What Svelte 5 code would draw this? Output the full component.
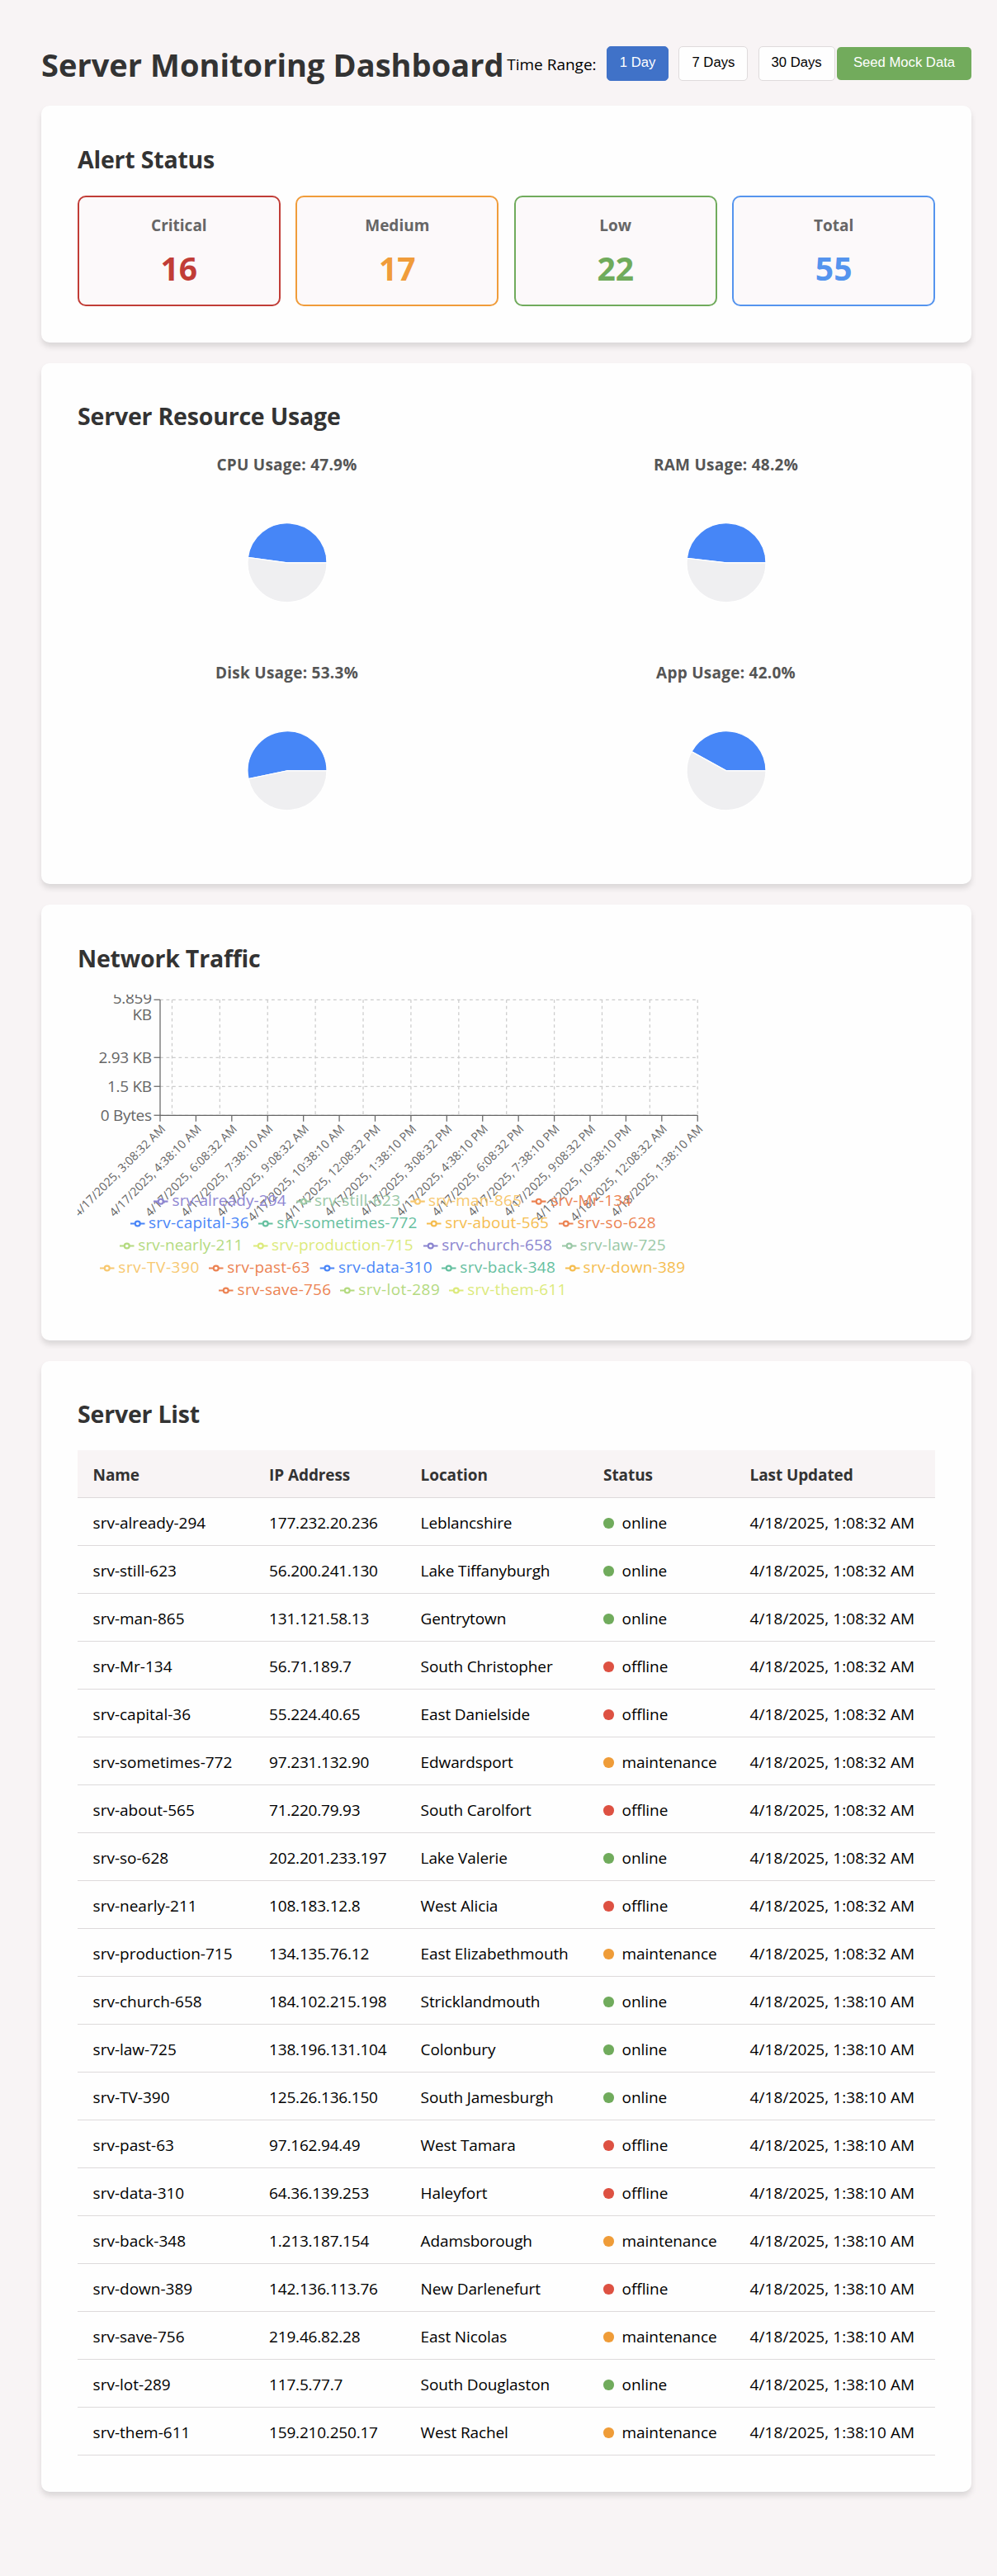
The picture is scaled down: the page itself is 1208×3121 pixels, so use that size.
<script>
  const ranges = ['1 Day', '7 Days', '30 Days'];
  let selected = $state('1 Day');

  const alerts = [
    { label: 'Critical', value: 16, tone: 'critical' },
    { label: 'Medium', value: 17, tone: 'medium' },
    { label: 'Low', value: 22, tone: 'low' },
    { label: 'Total', value: 55, tone: 'total' }
  ];

  const usages = [
    { label: 'CPU Usage', value: 47.9 },
    { label: 'RAM Usage', value: 48.2 },
    { label: 'Disk Usage', value: 53.3 },
    { label: 'App Usage', value: 42.0 }
  ];

  const R = 48;

  // Pie slice between two percentages, counter-clockwise from three o'clock.
  function slice(from, to) {
    const a = (from / 100) * 2 * Math.PI;
    const b = (to / 100) * 2 * Math.PI;
    const large = to - from > 50 ? 1 : 0;
    return `M${R * Math.cos(a)},${-R * Math.sin(a)} A${R},${R} 0 ${large} 0 ${R * Math.cos(b)},${-R * Math.sin(b)} L0,0 Z`;
  }

  // Plot area of the traffic chart
  const plot = { left: 100, right: 751.25, top: 6.25, bottom: 146.25 };
  const step = (plot.right - plot.left) / 15;
  const columns = Array.from({ length: 12 }, (_, i) => plot.right - (i * step * 4) / 3);
  const yTicks = [
    { y: 76.25, label: '2.93 KB' },
    { y: 111.25, label: '1.5 KB' },
    { y: 146.25, label: '0 Bytes' }
  ];
  const gridRows = [6.25, 76.25, 111.25, 146.25];
  const times = [
    '4/17/2025, 3:08:32 AM', '4/17/2025, 4:38:10 AM', '4/17/2025, 6:08:32 AM', '4/17/2025, 7:38:10 AM',
    '4/17/2025, 9:08:32 AM', '4/17/2025, 10:38:10 AM', '4/17/2025, 12:08:32 PM', '4/17/2025, 1:38:10 PM',
    '4/17/2025, 3:08:32 PM', '4/17/2025, 4:38:10 PM', '4/17/2025, 6:08:32 PM', '4/17/2025, 7:38:10 PM',
    '4/17/2025, 9:08:32 PM', '4/17/2025, 10:38:10 PM', '4/18/2025, 12:08:32 AM', '4/18/2025, 1:38:10 AM'
  ];

  // name, icon x, text x, text width, colour
  const legend = [
    { y: 250.7, items: [
      ['srv-already-294', 92, 114.6, 138, '#8f86d2'],
      ['srv-still-623', 265.3, 287, 104, '#9ac8a6'],
      ['srv-man-865', 403.3, 425, 113, '#f7c870'],
      ['srv-Mr-134', 550, 573.2, 98, '#ec8353']
    ] },
    { y: 277.5, items: [
      ['srv-capital-36', 64, 86, 121.5, '#4a86f7'],
      ['srv-sometimes-772', 219, 241.3, 170, '#66c0a0'],
      ['srv-about-565', 423, 445.3, 125.5, '#f5bd50'],
      ['srv-so-628', 583, 605.6, 95, '#ec8353']
    ] },
    { y: 304.5, items: [
      ['srv-nearly-211', 51, 73.3, 127, '#b4da80'],
      ['srv-production-715', 213, 235, 171.5, '#dcea7c'],
      ['srv-church-658', 419, 441.3, 133.5, '#8a84cf'],
      ['srv-law-725', 587, 608.6, 104, '#9ac8a6']
    ] },
    { y: 331.5, items: [
      ['srv-TV-390', 27, 49.3, 98, '#f7c870'],
      ['srv-past-63', 159, 181.3, 100, '#ec8353'],
      ['srv-data-310', 293.7, 316, 113.5, '#4a86f7'],
      ['srv-back-348', 441, 463.3, 115.5, '#66c0a0'],
      ['srv-down-389', 591, 612.6, 123.5, '#f5bd50']
    ] },
    { y: 358.5, items: [
      ['srv-save-756', 171, 193.6, 113.5, '#ec8353'],
      ['srv-lot-289', 318, 340.3, 98.5, '#b4da80'],
      ['srv-them-611', 450, 472.3, 120, '#dcea7c']
    ] }
  ];

  const early = '4/18/2025, 1:08:32 AM';
  const late = '4/18/2025, 1:38:10 AM';
  const servers = [
    ['srv-already-294', '177.232.20.236', 'Leblancshire', 'online', early],
    ['srv-still-623', '56.200.241.130', 'Lake Tiffanyburgh', 'online', early],
    ['srv-man-865', '131.121.58.13', 'Gentrytown', 'online', early],
    ['srv-Mr-134', '56.71.189.7', 'South Christopher', 'offline', early],
    ['srv-capital-36', '55.224.40.65', 'East Danielside', 'offline', early],
    ['srv-sometimes-772', '97.231.132.90', 'Edwardsport', 'maintenance', early],
    ['srv-about-565', '71.220.79.93', 'South Carolfort', 'offline', early],
    ['srv-so-628', '202.201.233.197', 'Lake Valerie', 'online', early],
    ['srv-nearly-211', '108.183.12.8', 'West Alicia', 'offline', early],
    ['srv-production-715', '134.135.76.12', 'East Elizabethmouth', 'maintenance', early],
    ['srv-church-658', '184.102.215.198', 'Stricklandmouth', 'online', late],
    ['srv-law-725', '138.196.131.104', 'Colonbury', 'online', late],
    ['srv-TV-390', '125.26.136.150', 'South Jamesburgh', 'online', late],
    ['srv-past-63', '97.162.94.49', 'West Tamara', 'offline', late],
    ['srv-data-310', '64.36.139.253', 'Haleyfort', 'offline', late],
    ['srv-back-348', '1.213.187.154', 'Adamsborough', 'maintenance', late],
    ['srv-down-389', '142.136.113.76', 'New Darlenefurt', 'offline', late],
    ['srv-save-756', '219.46.82.28', 'East Nicolas', 'maintenance', late],
    ['srv-lot-289', '117.5.77.7', 'South Douglaston', 'online', late],
    ['srv-them-611', '159.210.250.17', 'West Rachel', 'maintenance', late]
  ];
</script>

<div class="dashboard">
  <header>
    <h1>Server Monitoring Dashboard</h1>
    <div class="time-range">
      <span class="range-label">Time Range:</span>
      {#each ranges as range}
        <button class="range" class:active={selected === range} onclick={() => (selected = range)}>{range}</button>
      {/each}
    </div>
    <button class="seed">Seed Mock Data</button>
  </header>

  <section class="card">
    <h2>Alert Status</h2>
    <div class="alerts">
      {#each alerts as alert}
        <div class="alert {alert.tone}">
          <h3>{alert.label}</h3>
          <p>{alert.value}</p>
        </div>
      {/each}
    </div>
  </section>

  <section class="card resources">
    <h2>Server Resource Usage</h2>
    <div class="usages">
      {#each usages as usage}
        <div class="usage">
          <h4>{usage.label}: {usage.value.toFixed(1)}%</h4>
          <svg width="250" height="187.5" viewBox="-125 -93.75 250 187.5">
            <path class="used" d={slice(0, usage.value)} />
            <path class="free" d={slice(usage.value, 100)} />
          </svg>
        </div>
      {/each}
    </div>
  </section>

  <section class="card">
    <h2>Network Traffic</h2>
    <svg class="traffic" width="1039" height="375" viewBox="0 0 1039 375">
      <g class="grid">
        {#each gridRows as y}
          <line x1={plot.left} x2={plot.right} y1={y} y2={y} />
        {/each}
        {#each columns as x}
          <line x1={x} x2={x} y1={plot.top} y2={plot.bottom} />
        {/each}
      </g>
      <g class="axis">
        <line x1={plot.left} x2={plot.right} y1={plot.bottom} y2={plot.bottom} />
        <line x1={plot.left} x2={plot.left} y1={plot.top} y2={plot.bottom} />
        {#each gridRows as y}
          <line x1={plot.left - 7.5} x2={plot.left} y1={y} y2={y} />
        {/each}
        {#each times as _, i}
          <line x1={plot.left + i * step} x2={plot.left + i * step} y1={plot.bottom} y2={plot.bottom + 7.5} />
        {/each}
      </g>
      <g class="y-labels">
        <text x="89.7" y="10.9">5.859</text>
        <text x="89.7" y="31.3">KB</text>
        {#each yTicks as tick}
          <text x="89.7" y={tick.y + 6.8}>{tick.label}</text>
        {/each}
      </g>
      <g class="x-labels">
        {#each times as time, i}
          <text transform="translate({plot.left + i * step} {plot.bottom + 10}) rotate(-45)" y="10.4">{time}</text>
        {/each}
      </g>
      {#each legend as row}
        {#each row.items as [name, iconX, textX, width, color]}
          <g transform="translate({iconX} {row.y})" stroke={color} stroke-width="2.2" fill="none">
            <path d="M0,0H5.8M11.7,0H17.5" />
            <circle cx="8.75" cy="0" r="2.95" />
          </g>
          <text class="series" x={textX} y={row.y + 5.4} textLength={width} fill={color}>{name}</text>
        {/each}
      {/each}
    </svg>
  </section>

  <section class="card list">
    <h2>Server List</h2>
    <table>
      <colgroup>
        <col class="c-name" /><col class="c-ip" /><col class="c-location" /><col class="c-status" /><col />
      </colgroup>
      <thead>
        <tr><th>Name</th><th>IP Address</th><th>Location</th><th>Status</th><th>Last Updated</th></tr>
      </thead>
      <tbody>
        {#each servers as [name, ip, location, status, updated]}
          <tr>
            <td>{name}</td>
            <td class="ip">{ip}</td>
            <td class="location">{location}</td>
            <td><span class="status"><i class="dot {status}"></i>{status}</span></td>
            <td class="updated">{updated}</td>
          </tr>
        {/each}
      </tbody>
    </table>
  </section>
</div>

<style>
  :global(body) {
    background: #f8f4f5;
  }

  .dashboard {
    display: flex;
    flex-direction: column;
    gap: 25px;
    width: 1127px;
    min-height: 3121px;
    box-sizing: border-box;
    margin-left: 50px;
    padding-top: 50px;
    font-family: 'Open Sans', 'Noto Sans', sans-serif;
    font-size: 19px;
    color: #000;
  }

  h1, h2, h3, h4, p {
    margin: 0;
  }

  header {
    display: flex;
    align-items: center;
    gap: 2.4px;
    height: 53px;
  }

  h1 {
    padding-top: 3px;
    font-size: 38px;
    line-height: 50px;
    letter-spacing: 0.03px;
    font-weight: 700;
    color: #333;
    white-space: nowrap;
  }

  .time-range {
    display: flex;
    align-items: center;
    gap: 12.2px;
    margin-left: auto;
  }

  .range-label {
    padding-top: 2px;
    line-height: 26px;
    white-space: nowrap;
  }

  button {
    box-sizing: border-box;
    padding: 0 15px 1px;
    border-radius: 5px;
    font-family: 'Liberation Sans', Arial, sans-serif;
    font-size: 16.67px;
    font-weight: 400;
    white-space: nowrap;
    cursor: pointer;
  }

  .range {
    height: 42px;
    border: 1px solid #dfdbdc;
    background: #fefefe;
    color: #000;
  }

  .range.active {
    border-color: #4072c8;
    background: #4072c8;
    color: #fff;
  }

  .seed {
    width: 163px;
    height: 40px;
    border: none;
    background: #72ab5c;
    color: #fff;
  }

  .card {
    padding: 44px;
    border-radius: 10px;
    background: #fefefe;
    box-shadow: 0 5px 7.5px rgba(0, 0, 0, 0.12);
  }

  h2 {
    margin-bottom: 25px;
    padding-top: 2px;
    font-size: 28.5px;
    line-height: 38px;
    letter-spacing: -0.2px;
    font-weight: 700;
    color: #333;
  }

  .resources h2 {
    margin-bottom: 26px;
    padding-top: 1px;
  }

  .list h2 {
    padding-top: 1px;
  }

  .alerts {
    display: grid;
    grid-template-columns: repeat(4, 1fr);
    gap: 18.75px;
  }

  .alert {
    box-sizing: border-box;
    height: 134px;
    padding-top: 20.6px;
    border: 2px solid currentColor;
    border-radius: 10px;
    background: #fcf9fa;
    text-align: center;
  }

  .alert h3 {
    font-size: 19px;
    line-height: 26px;
    font-weight: 700;
    color: #666;
  }

  .alert p {
    margin-top: 15px;
    font-size: 39px;
    line-height: 48px;
    font-weight: 700;
  }

  .critical { color: #c13d37; }
  .medium { color: #f09c3a; }
  .low { color: #70ab5c; }
  .total { color: #5594ee; }

  .usages {
    display: grid;
    grid-template-columns: repeat(2, 1fr);
    gap: 25px;
  }

  .usage {
    display: flex;
    flex-direction: column;
    align-items: center;
    gap: 11px;
  }

  .usage h4 {
    padding-top: 1px;
    font-size: 19px;
    line-height: 27px;
    letter-spacing: 0.25px;
    font-weight: 700;
    color: #555;
  }

  .usage svg, .traffic {
    display: block;
  }

  .used, .free {
    stroke: #fff;
    stroke-width: 1.25;
  }

  .used { fill: #4686f7; }
  .free { fill: #efeff1; }

  .traffic {
    overflow: hidden;
  }

  .grid line {
    stroke: #ccc;
    stroke-width: 1.25;
    stroke-dasharray: 3.75 3.75;
  }

  .axis line {
    stroke: #666;
    stroke-width: 1.25;
  }

  .y-labels text {
    fill: #666;
    font-size: 19px;
    letter-spacing: -0.32px;
    text-anchor: end;
  }

  .x-labels text {
    fill: #666;
    font-size: 14.25px;
    letter-spacing: 0.08px;
    text-anchor: end;
  }

  .series {
    font-size: 19px;
  }

  table {
    width: 100%;
    table-layout: fixed;
    border-collapse: separate;
    border-spacing: 0;
  }

  .c-name { width: 213.5px; }
  .c-ip { width: 183.5px; }
  .c-location { width: 221.5px; }
  .c-status { width: 177.5px; }

  th, td {
    box-sizing: border-box;
    height: 58px;
    padding: 3px 0 0 18.6px;
    border-bottom: 1px solid #dddadb;
    line-height: 26px;
    text-align: left;
    white-space: nowrap;
  }

  th {
    padding-top: 2px;
    background: #f8f4f5;
    font-weight: 700;
    letter-spacing: -0.1px;
    color: #333;
  }

  .ip { letter-spacing: -0.2px; }
  .location { letter-spacing: -0.12px; }
  .updated { letter-spacing: 0.07px; }

  .status {
    display: flex;
    align-items: center;
    letter-spacing: -0.06px;
  }

  .dot {
    flex: none;
    width: 12.5px;
    height: 12.5px;
    margin: 1px 10px 0 0;
    border-radius: 50%;
  }

  .online { background: #70ab5c; }
  .offline { background: #dd5142; }
  .maintenance { background: #ef9c38; }
</style>
